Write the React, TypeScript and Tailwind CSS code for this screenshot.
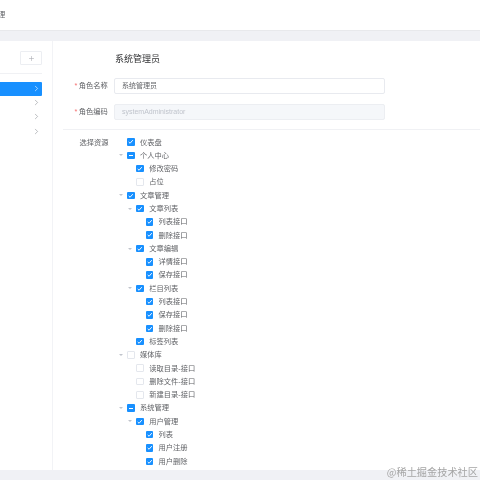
import { ChevronRight, Plus } from 'lucide-react';

type CheckState = 'on' | 'off' | 'half';

interface TreeRow {
  level: number;
  label: string;
  state: CheckState;
  caret?: boolean;
}

const rows: TreeRow[] = [
  { level: 0, label: '仪表盘', state: 'on' },
  { level: 0, label: '个人中心', state: 'half', caret: true },
  { level: 1, label: '修改密码', state: 'on' },
  { level: 1, label: '占位', state: 'off' },
  { level: 0, label: '文章管理', state: 'on', caret: true },
  { level: 1, label: '文章列表', state: 'on', caret: true },
  { level: 2, label: '列表接口', state: 'on' },
  { level: 2, label: '删除接口', state: 'on' },
  { level: 1, label: '文章编辑', state: 'on', caret: true },
  { level: 2, label: '详情接口', state: 'on' },
  { level: 2, label: '保存接口', state: 'on' },
  { level: 1, label: '栏目列表', state: 'on', caret: true },
  { level: 2, label: '列表接口', state: 'on' },
  { level: 2, label: '保存接口', state: 'on' },
  { level: 2, label: '删除接口', state: 'on' },
  { level: 1, label: '标签列表', state: 'on' },
  { level: 0, label: '媒体库', state: 'off', caret: true },
  { level: 1, label: '读取目录-接口', state: 'off' },
  { level: 1, label: '删除文件-接口', state: 'off' },
  { level: 1, label: '新建目录-接口', state: 'off' },
  { level: 0, label: '系统管理', state: 'half', caret: true },
  { level: 1, label: '用户管理', state: 'on', caret: true },
  { level: 2, label: '列表', state: 'on' },
  { level: 2, label: '用户注册', state: 'on' },
  { level: 2, label: '用户删除', state: 'on' },
];

function Checkbox({ state }: { state: CheckState }) {
  if (state === 'off') {
    return <span className="w-[7.5px] h-[7.5px] shrink-0 rounded-[1px] border border-[#e4e7ed] bg-white" />;
  }
  return (
    <span className="w-[7.5px] h-[7.5px] shrink-0 rounded-[1px] bg-[#1890ff] flex items-center justify-center">
      {state === 'on' ? (
        <svg className="w-[7.5px] h-[7.5px]" viewBox="0 0 7 7" fill="none" stroke="#fff" strokeWidth={0.9}>
          <path d="M1.6 3.7l1.3 1.2 2.5-2.9" />
        </svg>
      ) : (
        <span className="w-[4px] h-px bg-white" />
      )}
    </span>
  );
}

function Tree() {
  return (
    <div className="flex flex-col">
      {rows.map((row, i) => (
        <div key={i} className="flex items-center h-[13.3px]">
          {row.level === 1 && <span className="w-[9.3px] shrink-0" />}
          {row.level === 2 && <span className="w-[18.6px] shrink-0" />}
          <span className="w-[12px] shrink-0 flex justify-center">
            {row.caret && (
              <span className="w-0 h-0 border-x-[2px] border-x-transparent border-t-[2.5px] border-t-[#c0c4cc]" />
            )}
          </span>
          <Checkbox state={row.state} />
          <span className="ml-[5.5px] text-[7.25px] leading-none text-[#606266] whitespace-nowrap">{row.label}</span>
        </div>
      ))}
    </div>
  );
}

function SideRow({ active }: { active?: boolean }) {
  return (
    <div
      className={`h-[14.2px] flex items-center justify-end pr-[1.5px] rounded-r-[1px] ${active ? 'bg-[#1890ff] text-white' : 'text-[#909399]'}`}
    >
      <ChevronRight className="w-[9px] h-[9px]" strokeWidth={1.6} />
    </div>
  );
}

export default function App() {
  return (
    <div
      className="relative w-[480px] h-[480px] overflow-hidden flex flex-col bg-[#f0f1f5] blur-[0.4px]"
      style={{ fontFamily: '"Liberation Sans", "Noto Sans CJK SC", sans-serif' }}
    >
      <header className="h-[31px] shrink-0 bg-white border-b border-[#e8e9ec] flex items-center overflow-hidden">
        <span className="-ml-[2px] text-[7.25px] leading-none text-[#606266]">理</span>
      </header>

      <div className="h-[10px] shrink-0" />

      <main className="flex-1 min-h-0 bg-white flex">
        <aside className="w-[53px] shrink-0 border-r border-[#f2f3f6] pr-[10px] pt-[10px]">
          <div className="flex justify-end pb-[8px] border-b border-[#f0f1f4]">
            <button className="w-[22px] h-[14px] border border-[#eceef2] rounded-[1px] flex items-center justify-center text-[#a8abb2]">
              <Plus className="w-[7px] h-[7px]" strokeWidth={2} />
            </button>
          </div>
          <div className="mt-[7.5px] flex flex-col">
            <SideRow active />
            <SideRow />
            <SideRow />
            <SideRow />
          </div>
        </aside>

        <section className="flex-1 min-w-0 flex flex-col">
          <h1 className="ml-[62px] mt-[13px] text-[9px] leading-[11px] text-[#303133]">系统管理员</h1>

          <div className="mt-[13px] ml-[21.5px] flex items-center h-[16px]">
            <label className="w-[39.5px] shrink-0 text-[7.25px] leading-none text-[#606266] whitespace-nowrap">
              <span className="text-[#f56c6c] mr-[1.5px]">*</span>角色名称
            </label>
            <div className="w-[271px] h-[16px] border border-[#e8eaef] rounded-[2px] bg-white flex items-center pl-[7px] text-[7px] text-[#606266]">
              系统管理员
            </div>
          </div>

          <div className="mt-[10px] ml-[21.5px] flex items-center h-[16px]">
            <label className="w-[39.5px] shrink-0 text-[7.25px] leading-none text-[#606266] whitespace-nowrap">
              <span className="text-[#f56c6c] mr-[1.5px]">*</span>角色编码
            </label>
            <div className="w-[271px] h-[16px] border border-[#eceef2] rounded-[2px] bg-[#f5f7fa] flex items-center pl-[7px] text-[7px] text-[#c0c4cc]">
              systemAdministrator
            </div>
          </div>

          <div className="mt-[9px] ml-[10px] h-px bg-[#f0f1f4]" />

          <div className="mt-[5.5px] flex">
            <div className="w-[62px] shrink-0 pl-[26.5px] pt-[3.5px] text-[7.25px] leading-none text-[#606266] whitespace-nowrap">
              选择资源
            </div>
            <Tree />
          </div>
        </section>
      </main>

      <div className="h-[10px] shrink-0" />

      <span
        className="absolute right-[2px] bottom-[3px] text-[10.2px] leading-none text-[#a5a5a5] whitespace-nowrap"
        style={{ fontFamily: '"Noto Sans CJK SC", serif' }}
      >
        @稀土掘金技术社区
      </span>
    </div>
  );
}
